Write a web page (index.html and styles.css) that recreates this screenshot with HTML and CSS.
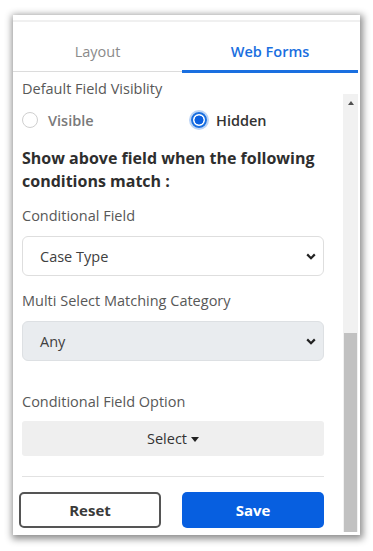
FILE: index.html
```html
<!DOCTYPE html>
<html>
<head>
<meta charset="utf-8">
<link rel="stylesheet" href="styles.css">
</head>
<body>
<div class="card">
  <div class="tabs">
    <div class="tab">Layout</div>
    <div class="tab active">Web Forms</div>
  </div>
  <div class="body">
    <div class="main">
      <div class="label first">Default Field Visiblity</div>
      <div class="radios">
        <div class="radio-item"><span class="radio"></span><span class="radio-text muted">Visible</span></div>
        <div class="radio-item"><span class="radio checked"></span><span class="radio-text">Hidden</span></div>
      </div>
      <div class="heading">Show above field when the following conditions match :</div>
      <div class="label l2">Conditional Field</div>
      <div class="select">
        <span>Case Type</span>
        <svg class="chev" width="10" height="7" viewBox="0 0 10 7"><path d="M1.2 1.4 L5 5.2 L8.8 1.4" fill="none" stroke="#222" stroke-width="2.2"/></svg>
      </div>
      <div class="label l3">Multi Select Matching Category</div>
      <div class="select disabled">
        <span>Any</span>
        <svg class="chev" width="10" height="7" viewBox="0 0 10 7"><path d="M1.2 1.4 L5 5.2 L8.8 1.4" fill="none" stroke="#222" stroke-width="2.2"/></svg>
      </div>
      <div class="label l4">Conditional Field Option</div>
      <div class="dropdown">Select<span class="caret"></span></div>
      <div class="rule"></div>
      <div class="actions">
        <div class="btn reset">Reset</div>
        <div class="btn save">Save</div>
      </div>
    </div>
    <div class="scrollbar">
      <div class="arrow"></div>
      <div class="track"></div>
      <div class="thumb"></div>
    </div>
  </div>
</div>
</body>
</html>
```

FILE: styles.css
```css
* { box-sizing: border-box; }
html, body { margin: 0; padding: 0; background: #fff; }
body {
  font-family: "Open Sans", "Noto Sans", sans-serif;
  width: 373px;
  height: 551px;
  overflow: hidden;
}
.card {
  margin: 15px 0 0 13px;
  width: 347px;
  height: 520px;
  background: #fff;
  box-shadow: 1px 2px 7px 2px rgba(0,0,0,0.45);
  display: flex;
  flex-direction: column;
}
.tabs {
  margin-top: 5px;
  border-top: 2px solid #f0f0f0;
  height: 53px;
  display: grid;
  grid-template-columns: 169px 176px;
}
.tab {
  display: flex;
  align-items: center;
  justify-content: center;
  padding-top: 9px;
  font-size: 14.5px;
  color: #8a8a8a;
  border-bottom: 1px solid #dcdcdc;
  margin-bottom: 1px;
}
.tab.active {
  color: #1a6fe0;
  font-weight: 600;
  border-bottom: 3px solid #1a6fe0;
  margin-bottom: 0;
  padding-top: 11px;
}
.body {
  flex: 1;
  display: flex;
  min-height: 0;
}
.main {
  flex: 1;
  padding: 0 19px 0 9px;
  display: flex;
  flex-direction: column;
}
.label {
  font-size: 14.5px;
  line-height: 20px;
  color: #585858;
}
.label.first { margin-top: 6px; }
.radios {
  margin-top: 11px;
  display: grid;
  grid-template-columns: 168px 1fr;
  height: 20px;
}
.radio-item {
  display: flex;
  align-items: center;
}
.radio {
  width: 16px;
  height: 16px;
  border-radius: 50%;
  border: 1px solid #cfcfcf;
  background: #fff;
  margin-right: 10px;
  flex: none;
}
.radio.checked {
  border: 2px solid #1a6fe0;
  background: radial-gradient(circle, #0a5fe0 0 4.2px, #fff 4.8px);
  box-shadow: 0 0 0 2px #bcd4f6;
  margin-left: 1px;
  margin-right: 9px;
}
.radio-text {
  font-size: 14.5px;
  color: #333;
  font-weight: 600;
}
.radio-text.muted { color: #7a7a7a; }
.heading {
  margin-top: 17px;
  font-size: 16px;
  line-height: 23px;
  font-weight: 700;
  color: #2e2e2e;
}
.label.l2 { margin-top: 13px; }
.label.l3 { margin-top: 15px; }
.label.l4 { margin-top: 31px; }
.select {
  margin-top: 10px;
  height: 40px;
  border: 1px solid #dedede;
  border-radius: 6px;
  display: flex;
  align-items: center;
  justify-content: space-between;
  padding: 0 7px 0 17px;
  font-size: 14.5px;
  color: #404040;
  background: #fff;
}
.select.disabled {
  background: #e9ecef;
  border-color: #dde0e3;
}
.chev { display: block; }
.dropdown {
  margin-top: 9px;
  height: 35px;
  background: #efefef;
  border-radius: 3px;
  display: flex;
  align-items: center;
  justify-content: center;
  font-size: 14.5px;
  color: #333;
}
.caret {
  display: inline-block;
  width: 0;
  height: 0;
  margin-left: 4px;
  margin-top: 1px;
  border-left: 4.5px solid transparent;
  border-right: 4.5px solid transparent;
  border-top: 5px solid #222;
}
.rule {
  margin-top: 20px;
  height: 1px;
  background: #e2e2e2;
}
.actions {
  margin-top: 15px;
  margin-left: -3px;
  display: flex;
  gap: 21px;
}
.btn {
  width: 142px;
  height: 36px;
  border-radius: 5px;
  display: flex;
  align-items: center;
  justify-content: center;
  font-size: 15px;
  font-weight: 700;
}
.btn.reset {
  border: 2px solid #555;
  color: #3a3a3a;
  background: #fff;
}
.btn.save {
  background: #075fe0;
  color: #fff;
}
.scrollbar {
  width: 15px;
  margin: 21px 2px 3px 0;
  background: #f1f1f1;
  display: flex;
  flex-direction: column;
}
.arrow {
  height: 17px;
  display: flex;
  align-items: center;
  justify-content: center;
}
.arrow::before {
  content: "";
  width: 0;
  height: 0;
  border-left: 3.5px solid transparent;
  border-right: 3.5px solid transparent;
  border-bottom: 4px solid #505050;
}
.track { flex: 1; }
.thumb {
  height: 199px;
  margin: 0 1px;
  background: #c1c1c1;
}
```
